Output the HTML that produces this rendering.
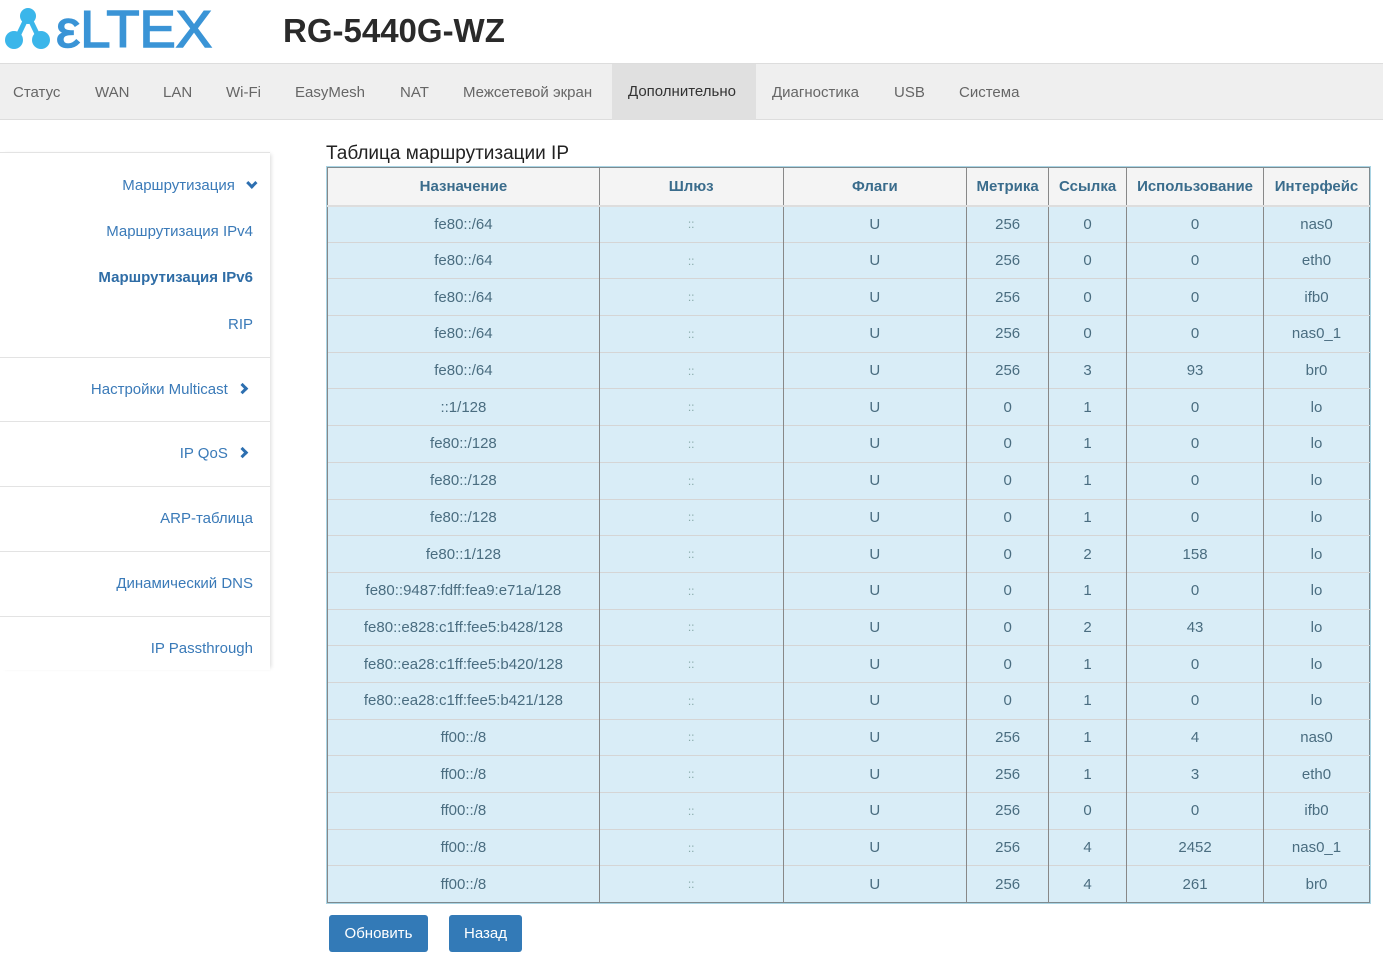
<!DOCTYPE html>
<html><head><meta charset="utf-8">
<style>
*{box-sizing:border-box;margin:0;padding:0}
body{width:1383px;height:960px;background:#fff;font-family:"Liberation Sans",Arial,sans-serif;position:relative;overflow:hidden;color:#333}
.title{position:absolute;left:283px;top:12px;font-size:33px;font-weight:bold;color:#2a2a2a}
.nav{position:absolute;left:0;top:63px;width:1383px;height:57px;background:#efefef;border-top:1px solid #ddd;border-bottom:1px solid #ddd}
.nav span{position:absolute;top:1px;height:55px;line-height:55px;font-size:15px;color:#666}
.nav .act{top:0;height:56px;background:#e0e0e0;color:#333;padding:0 16px}
.side{position:absolute;left:0;top:152px;width:270px;height:518px;border-top:1px solid #e3e3e3;box-shadow:3px 0 4px -2px rgba(0,0,0,.15)}
.side div{position:absolute;right:17px;font-size:15px;color:#3a7ab8;white-space:nowrap}
.side hr{position:absolute;left:0;width:270px;border:0;border-top:1px solid #e3e3e3}
.chev{display:inline-block;width:8px;height:8px;border-right:3px solid #2d6fb0;border-bottom:3px solid #2d6fb0;margin-left:8px}
h2{position:absolute;left:326px;top:143px;font-size:19px;font-weight:normal;color:#222}
table{position:absolute;left:327px;top:167px;width:1043px;border-collapse:collapse;border:1px solid #7d8a8f;outline:1px solid #a9d4e4;font-size:15px;color:#4a6d80}
th{height:38px;background:#f4f4f4;color:#3a6c8c;font-weight:bold;border-left:1px solid #888;border-bottom:2px solid #ddd}
td{height:36.7px;background:#d9edf7;text-align:center;border-left:1px solid #888;border-top:1px solid #d5d5d5;padding:0}
td.g{color:#8aa;font-size:12px}
.btn{position:absolute;top:915px;height:37px;line-height:37px;background:#337ab7;color:#fff;font-size:15px;border-radius:3px;text-align:center}
</style></head><body>
<svg style="position:absolute;left:0;top:0" width="220" height="60" viewBox="0 0 220 60">
<g stroke="#3bb6ea" stroke-width="5"><line x1="28" y1="15" x2="16" y2="40"/><line x1="28" y1="15" x2="40" y2="40"/></g>
<circle cx="28" cy="16" r="8" fill="#3bb6ea"/><circle cx="14" cy="40" r="9" fill="#3bb6ea"/><circle cx="41" cy="40" r="9" fill="#3bb6ea"/>
<text x="56" y="47" font-family="Liberation Sans,sans-serif" font-size="52" fill="#3a94d6" stroke="#3a94d6" stroke-width="1.5" textLength="156" lengthAdjust="spacingAndGlyphs">εLTEX</text>
</svg>
<div class="title">RG-5440G-WZ</div>
<div class="nav">
<span style="left:13px">Статус</span><span style="left:95px">WAN</span><span style="left:163px">LAN</span><span style="left:226px">Wi-Fi</span><span style="left:295px">EasyMesh</span><span style="left:400px">NAT</span><span style="left:463px">Межсетевой экран</span><span class="act" style="left:612px;width:144px">Дополнительно</span><span style="left:772px">Диагностика</span><span style="left:894px">USB</span><span style="left:959px">Система</span>
</div>
<div class="side">
<div style="top:24px">Маршрутизация <span class="chev" style="transform:rotate(45deg) translateY(-4px);margin-left:6px"></span></div>
<div style="top:70px">Маршрутизация IPv4</div>
<div style="top:116px;font-weight:bold;color:#2f6da6">Маршрутизация IPv6</div>
<div style="top:163px">RIP</div>
<hr style="top:204px">
<div style="top:228px;right:22px">Настройки Multicast <span class="chev" style="transform:rotate(-45deg) translateY(-2px)"></span></div>
<hr style="top:268px">
<div style="top:292px;right:22px">IP QoS <span class="chev" style="transform:rotate(-45deg) translateY(-2px)"></span></div>
<hr style="top:333px">
<div style="top:357px">ARP-таблица</div>
<hr style="top:398px">
<div style="top:422px">Динамический DNS</div>
<hr style="top:463px">
<div style="top:487px">IP Passthrough</div>
</div>
<h2>Таблица маршрутизации IP</h2>
<table>
<colgroup><col style="width:272px"><col style="width:184px"><col style="width:184px"><col style="width:82px"><col style="width:78px"><col style="width:137px"><col style="width:106px"></colgroup>
<tr><th>Назначение</th><th>Шлюз</th><th>Флаги</th><th>Метрика</th><th>Ссылка</th><th>Использование</th><th>Интерфейс</th></tr>
<tr><td>fe80::/64</td><td class="g">::</td><td>U</td><td>256</td><td>0</td><td>0</td><td>nas0</td></tr>
<tr><td>fe80::/64</td><td class="g">::</td><td>U</td><td>256</td><td>0</td><td>0</td><td>eth0</td></tr>
<tr><td>fe80::/64</td><td class="g">::</td><td>U</td><td>256</td><td>0</td><td>0</td><td>ifb0</td></tr>
<tr><td>fe80::/64</td><td class="g">::</td><td>U</td><td>256</td><td>0</td><td>0</td><td>nas0_1</td></tr>
<tr><td>fe80::/64</td><td class="g">::</td><td>U</td><td>256</td><td>3</td><td>93</td><td>br0</td></tr>
<tr><td>::1/128</td><td class="g">::</td><td>U</td><td>0</td><td>1</td><td>0</td><td>lo</td></tr>
<tr><td>fe80::/128</td><td class="g">::</td><td>U</td><td>0</td><td>1</td><td>0</td><td>lo</td></tr>
<tr><td>fe80::/128</td><td class="g">::</td><td>U</td><td>0</td><td>1</td><td>0</td><td>lo</td></tr>
<tr><td>fe80::/128</td><td class="g">::</td><td>U</td><td>0</td><td>1</td><td>0</td><td>lo</td></tr>
<tr><td>fe80::1/128</td><td class="g">::</td><td>U</td><td>0</td><td>2</td><td>158</td><td>lo</td></tr>
<tr><td>fe80::9487:fdff:fea9:e71a/128</td><td class="g">::</td><td>U</td><td>0</td><td>1</td><td>0</td><td>lo</td></tr>
<tr><td>fe80::e828:c1ff:fee5:b428/128</td><td class="g">::</td><td>U</td><td>0</td><td>2</td><td>43</td><td>lo</td></tr>
<tr><td>fe80::ea28:c1ff:fee5:b420/128</td><td class="g">::</td><td>U</td><td>0</td><td>1</td><td>0</td><td>lo</td></tr>
<tr><td>fe80::ea28:c1ff:fee5:b421/128</td><td class="g">::</td><td>U</td><td>0</td><td>1</td><td>0</td><td>lo</td></tr>
<tr><td>ff00::/8</td><td class="g">::</td><td>U</td><td>256</td><td>1</td><td>4</td><td>nas0</td></tr>
<tr><td>ff00::/8</td><td class="g">::</td><td>U</td><td>256</td><td>1</td><td>3</td><td>eth0</td></tr>
<tr><td>ff00::/8</td><td class="g">::</td><td>U</td><td>256</td><td>0</td><td>0</td><td>ifb0</td></tr>
<tr><td>ff00::/8</td><td class="g">::</td><td>U</td><td>256</td><td>4</td><td>2452</td><td>nas0_1</td></tr>
<tr><td>ff00::/8</td><td class="g">::</td><td>U</td><td>256</td><td>4</td><td>261</td><td>br0</td></tr>
</table>
<div class="btn" style="left:329px;width:99px">Обновить</div>
<div class="btn" style="left:449px;width:73px">Назад</div>
</body></html>
